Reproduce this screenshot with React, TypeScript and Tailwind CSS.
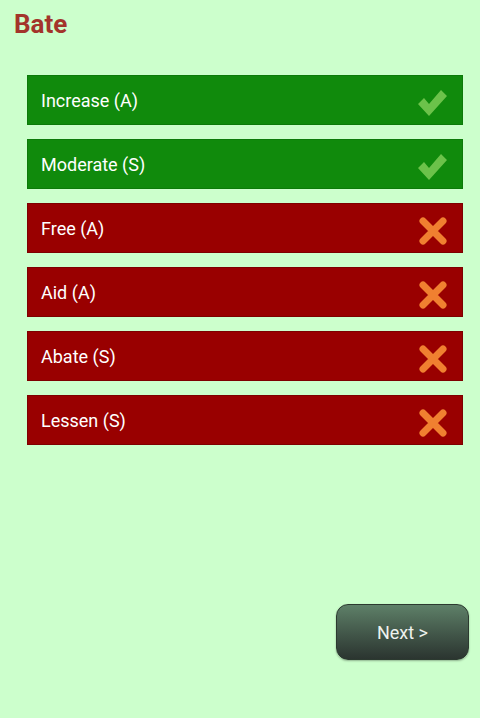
const answers = [
  { label: "Increase (A)", ok: true },
  { label: "Moderate (S)", ok: true },
  { label: "Free (A)", ok: false },
  { label: "Aid (A)", ok: false },
  { label: "Abate (S)", ok: false },
  { label: "Lessen (S)", ok: false },
];

function CheckIcon() {
  return (
    <svg width="32" height="30" viewBox="0 0 32 30">
      <path d="M2 16 L8 10 L13 16 L25 2 L31 8 L13 28 Z" fill="#6cc24a" />
    </svg>
  );
}

function CrossIcon() {
  return (
    <svg width="30" height="30" viewBox="0 0 30 30">
      <path
        d="M5 5 L25 25 M25 5 L5 25"
        stroke="#f08030"
        strokeWidth="7"
        strokeLinecap="round"
      />
    </svg>
  );
}

export default function App() {
  return (
    <div
      className="w-[480px] h-[718px] bg-[#ccffcc] flex flex-col"
      style={{ fontFamily: "Roboto, 'Liberation Sans', sans-serif" }}
    >
      <h1 className="pl-[14px] pt-[8px] text-[26px] font-bold text-[#a3342b] leading-[32px]">
        Bate
      </h1>

      {/* Answer rows */}
      <div className="mt-[35px] mx-[27px] w-[436px] flex flex-col gap-[14px]">
        {answers.map((a) => (
          <div
            key={a.label}
            className={
              "h-[50px] flex items-center justify-between pl-[13px] pr-[14px] border " +
              (a.ok
                ? "bg-[#108a0c] border-[#0c7a09]"
                : "bg-[#990000] border-[#7e0000]")
            }
          >
            <span className="text-[18px] text-white">{a.label}</span>
            <span className="mt-[6px]">{a.ok ? <CheckIcon /> : <CrossIcon />}</span>
          </div>
        ))}
      </div>

      <div className="flex-1" />

      <div className="flex justify-end pr-[11px] pb-[58px]">
        <button className="w-[133px] h-[56px] rounded-[12px] border border-[#2c3a30] bg-gradient-to-b from-[#5e8068] to-[#2b3530] text-[18px] text-[#eef2ee] shadow-[0_1px_2px_rgba(0,0,0,0.3)]">
          Next &gt;
        </button>
      </div>
    </div>
  );
}
